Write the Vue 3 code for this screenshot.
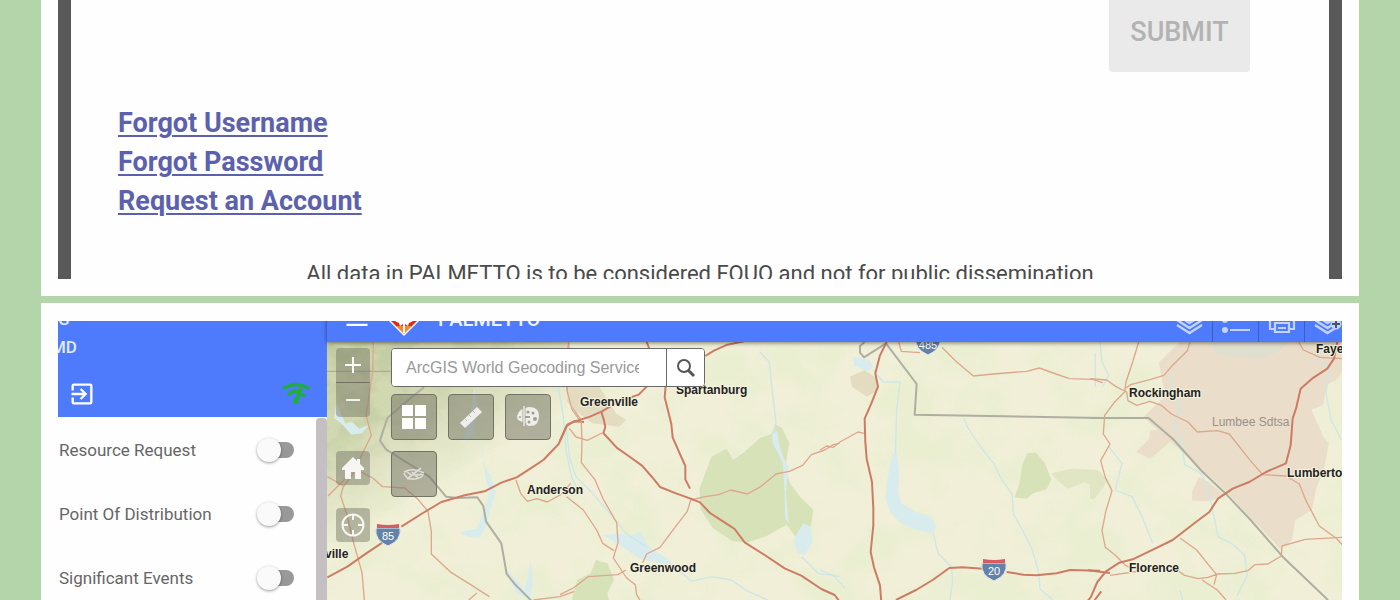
<template>
  <main class="page">
    <section class="card card-login">
      <form class="login" @submit.prevent>
        <button class="submit" type="submit" disabled>SUBMIT</button>
        <nav class="links">
          <a href="#username">Forgot Username</a>
          <a href="#password">Forgot Password</a>
          <a href="#account">Request an Account</a>
        </nav>
        <p class="notice">All data in PALMETTO is to be considered FOUO and not for public dissemination</p>
      </form>
    </section>

    <section class="card card-app">
      <div class="app">
        <aside class="sidebar">
          <div class="profile">
            <div class="who">
              <span>G</span>
              <span>MD</span>
            </div>
            <div class="profile-actions">
              <button class="plain" aria-label="Log out">
                <svg width="28" height="28" viewBox="0 0 24 24" fill="#fff">
                  <path d="M10.1 15.6 11.5 17l5-5-5-5-1.4 1.4L12.7 11H3v2h9.7zM19 3H5a2 2 0 0 0-2 2v4h2V5h14v14H5v-4H3v4a2 2 0 0 0 2 2h14a2 2 0 0 0 2-2V5a2 2 0 0 0-2-2z" />
                </svg>
              </button>
              <svg width="30" height="26" viewBox="0 0 30 26" fill="none" stroke="#1fae3c" stroke-width="3.4">
                <path d="M2 8Q14 -1 28 8M7 14Q12 9 18 10.500M20 13l4 2" />
                <path d="M20 7l-5 14" stroke-width="4" />
                <circle cx="15" cy="20" r="2" fill="#1fae3c" stroke-width="2" />
              </svg>
            </div>
          </div>
          <div class="layers">
            <ul>
              <li v-for="layer in layers" :key="layer.id">
                <label :for="layer.id">{{ layer.name }}</label>
                <input :id="layer.id" v-model="layer.on" type="checkbox" class="toggle" />
              </li>
            </ul>
            <div class="scrollbar"></div>
          </div>
        </aside>

        <div class="content">
          <header class="toolbar">
            <button class="plain menu" aria-label="Menu">
              <svg width="28" height="28" viewBox="0 0 24 24" fill="#fff">
                <path d="M3 6h18v2H3zM3 11h18v2H3zM3 16h18v2H3z" />
              </svg>
            </button>
            <svg class="logo" width="34" height="34" viewBox="0 0 34 34">
              <path d="M17 0 34 17 17 34 0 17z" fill="#fff" />
              <path d="M17 2 32 17H2z" fill="#d91f26" />
              <path d="M2 17h30l-8 8H10z" fill="#de2a22" />
              <path d="M9 24h16l-8 8z" fill="#f3862f" />
              <path d="M16 31v-9l-3 2-1-3-4-2 3-5 6-5 6 5 3 5-4 2-1 3-3-2v9z" fill="#fff" />
            </svg>
            <h1>PALMETTO</h1>
            <div class="toolbar-actions">
              <button aria-label="Layers">
                <svg width="35" height="35" viewBox="0 0 35 35" fill="none" stroke="#c3d3fd" stroke-width="2.4">
                  <path d="m5 13 12.500-8L30 13 17.500 21zM5 18l12.500 8L30 18M5 23l12.500 8L30 23" />
                </svg>
              </button>
              <button aria-label="Legend">
                <svg width="32" height="32" viewBox="0 0 32 32" fill="#c3d3fd">
                  <circle cx="5" cy="7" r="3" /><circle cx="5" cy="17" r="3" /><circle cx="5" cy="27" r="3" />
                  <path d="M10 6h20v2H10zM10 16h20v2H10zM10 26h20v2H10z" />
                </svg>
              </button>
              <button aria-label="Print">
                <svg width="32" height="32" viewBox="0 0 32 32" fill="none" stroke="#c3d3fd" stroke-width="2.2">
                  <path d="M8 10V4h16v6M9 26H4V15q0-4 4-4h16q4 0 4 4v11h-5M9 20h14v9H9zM12 25h8" />
                </svg>
              </button>
              <button aria-label="Add layer">
                <svg width="35" height="35" viewBox="0 0 35 35" fill="none" stroke="#c3d3fd" stroke-width="2.4">
                  <path d="m5 13 12.500-8L30 13 17.500 21zM5 18l12.500 8L30 18M5 23l12.500 8L30 23" />
                  <circle cx="26" cy="22" r="5" fill="#c3d3fd" stroke-width="1" />
                  <path d="M26 18v8M22 22h8" stroke="#4a5372" stroke-width="2" />
                </svg>
              </button>
            </div>
          </header>

          <div class="map">
            <svg class="basemap" viewBox="0 0 1015 258" preserveAspectRatio="xMinYMin slice">
              <defs>
                <filter id="mottle" x="0" y="0" width="100%" height="100%">
                  <feTurbulence type="fractalNoise" baseFrequency="0.018 0.022" numOctaves="5" seed="7" />
                  <feColorMatrix values="0 0 0 0 .8  0 0 0 0 .86  0 0 0 0 .62  4 0 0 0 -1.6" />
                </filter>
                <filter id="relief" x="0" y="0" width="100%" height="100%">
                  <feTurbulence type="fractalNoise" baseFrequency="0.04 0.06" numOctaves="4" seed="12" />
                  <feColorMatrix values="0 0 0 0 .48  0 0 0 0 .55  0 0 0 0 .32  3.6 0 0 0 -1.4" />
                </filter>
                <linearGradient id="hills" x1="0" y1="0" x2="0.7" y2="1">
                  <stop offset="0" stop-color="#fff" />
                  <stop offset=".35" stop-color="#fff" stop-opacity=".8" />
                  <stop offset=".7" stop-color="#fff" stop-opacity="0" />
                </linearGradient>
                <mask id="highland"><rect width="240" height="200" fill="url(#hills)" /></mask>
              </defs>

              <rect width="1015" height="258" fill="#f1efd8" />
              <rect width="1015" height="258" filter="url(#mottle)" opacity=".55" />
              <g mask="url(#highland)">
                <rect width="240" height="200" fill="#bec897" opacity=".7" />
                <rect width="240" height="200" filter="url(#relief)" opacity=".6" />
              </g>

              <g transform="scale(.33333)">
                <g v-for="tile in tiles" :key="tile.x" :transform="`translate(${tile.x} -96)`">
                  <path v-for="(shape, i) in tile.shapes" :key="i" :class="shape[0]" :d="shape[1]" />
                </g>
              </g>

              <g v-for="s in shields" :key="s.text" :transform="`translate(${s.x} ${s.y})`">
                <path d="M-12-6H12Q14 6 0 12-14 6-12-6z" fill="#6482a8" stroke="#e9edf0" />
                <path v-if="s.text !== '485'" d="M-11-10q11 2 22 0v4h-22z" fill="#d95b62" />
                <text class="shield" y="6">{{ s.text }}</text>
              </g>
              <text v-for="c in cities" :key="c.name" class="city" :x="c.x" :y="c.y">{{ c.name }}</text>
              <text class="area" x="885" y="84">Lumbee Sdtsa</text>
            </svg>

            <div class="controls">
              <div class="nav-controls">
                <div class="zoom">
                  <button aria-label="Zoom in">
                    <svg width="18" height="18" viewBox="0 0 18 18"><path d="M9 1v16M1 9h16" stroke="#fff" stroke-width="2" /></svg>
                  </button>
                  <button aria-label="Zoom out">
                    <svg width="18" height="18" viewBox="0 0 18 18"><path d="M2 9h14" stroke="#f1f1ee" stroke-width="2" /></svg>
                  </button>
                </div>
                <button class="home" aria-label="Default extent">
                  <svg width="24" height="24" viewBox="0 0 24 24" fill="#f7f6f4">
                    <path d="M12 1 1 12v2h3v9h6v-7h4v7h6v-9h3v-2l-4-4V3h-3v2z" />
                  </svg>
                </button>
                <button class="locate" aria-label="My location">
                  <svg width="26" height="26" viewBox="0 0 26 26" fill="none" stroke="#f7f6f2" stroke-width="2">
                    <circle cx="13" cy="13" r="10.500" /><path d="M13 2v6M13 18v6M2 13h6M18 13h6" />
                  </svg>
                </button>
              </div>

              <div class="panel">
                <form class="search" @submit.prevent>
                  <input v-model="query" type="text" aria-label="Search" placeholder="ArcGIS World Geocoding Service" />
                  <button aria-label="Find">
                    <svg width="20" height="20" viewBox="0 0 20 20" fill="none" stroke="#555">
                      <circle cx="8" cy="8" r="6" stroke-width="2" /><path d="m12 12 6 6" stroke-width="3" />
                    </svg>
                  </button>
                </form>
                <div class="widgets">
                  <button aria-label="Basemap gallery">
                    <svg width="24" height="24" viewBox="0 0 24 24" fill="#fff"><path d="M0 0h11v11H0zM13 0h11v11H13zM0 13h11v11H0zM13 13h11v11H13z" /></svg>
                  </button>
                  <button aria-label="Measurement">
                    <svg width="24" height="24" viewBox="0 0 24 24">
                      <path d="m1 18 17-16 5 5L6 23z" fill="#efeeea" />
                      <path d="m6 14 2 2m2-6 2 2m2-6 2 2" stroke="#b9bab0" fill="none" />
                    </svg>
                  </button>
                  <button aria-label="Draw">
                    <svg width="26" height="24" viewBox="0 0 26 24">
                      <path d="M2 11Q4 3 14 2q10 0 10 9 0 10-9 10-4 0-5-4Q2 17 2 11z" fill="#efeee9" />
                      <g fill="#9fa28d"><circle cx="13" cy="7" r="1.500" /><circle cx="18" cy="8" r="1.500" /><circle cx="20" cy="14" r="2" /><circle cx="14" cy="17" r="1.500" /><circle cx="5" cy="12" r="1" /></g>
                      <path d="M9 1v20" stroke="#9fa28d" stroke-width="3" /><path d="M9 1v20" stroke="#efeee9" stroke-width="1.500" /><path d="M10 12h5" stroke="#9fa28d" stroke-width="2" />
                    </svg>
                  </button>
                  <button aria-label="Visibility">
                    <svg width="24" height="20" viewBox="0 0 24 20" fill="none" stroke="#dddcd6">
                      <path d="M2 8q10-5 20 1M2 9q2 7 11 6 8-1 8-5M5 8q6 5 15 2M5 15 19 4M10 8l6 6" stroke-width="1.600" />
                    </svg>
                  </button>
                </div>
              </div>
            </div>
          </div>
        </div>
      </div>
    </section>
  </main>
</template>

<script setup>
import { reactive, ref } from 'vue';

const query = ref('');

const layers = reactive([
  { id: 'resource', name: 'Resource Request', on: false },
  { id: 'distribution', name: 'Point Of Distribution', on: false },
  { id: 'events', name: 'Significant Events', on: false },
]);

const cities = [
  { name: 'Greenville', x: 253, y: 64 },
  { name: 'Spartanburg', x: 349, y: 52 },
  { name: 'Anderson', x: 200, y: 152 },
  { name: 'Greenwood', x: 303, y: 230 },
  { name: 'ville', x: -2, y: 216 },
  { name: 'Rockingham', x: 802, y: 55 },
  { name: 'Fayetteville', x: 989, y: 11 },
  { name: 'Lumberton', x: 960, y: 135 },
  { name: 'Florence', x: 802, y: 230 },
];

const shields = [
  { text: '85', x: 61, y: 192 },
  { text: '20', x: 667, y: 227 },
  { text: '485', x: 601, y: 1 },
];

// each tile is [class, path] pairs in its own local units
const tiles = [
  {
    x: -21,
    shapes: [
      ['water', 'M50 280l12 30 14 30 20-4 22 20 28-10-20 24-32 4-26-30-26-20z'],
      ['water', 'M464 235l8 60-14 80-32 24 20-60zM485 400l10 70 16 26 16 50-18 60-10 42-20 36-36-4-24-14 50-10 22-50 18-60-12-40-6-40zM550 770l40 80 40 20-30-50zM632 752l8 70-14 48-12-30z'],
      ['stream', 'M710 200l10 60 10 60 8 100 16 80 20 40'],
      ['county', 'M20 184h192'],
      ['border', 'M312 232l-50 40-60 52-22 68 18 26 70 44 60 38 50 60 34 4 60-2 18 26 8 46 46 66 16 92 24 30 50 50'],
      ['minor', 'M160 96l-2 90-20 130 16 60-34 70-36 52-60 60M22 500l50 28 36-50 50 26 30 26 66 4 40 34 30 36 10 60 0 68 60 56 58 36 56 36M70 528l-8 30 20 60 16 70 28 100 8 92'],
      ['minor', 'M588 510l14 40 20 24 28-8 32 10 40-22 30-34M745 96l-5 65 0 75 16 54 26 38M640 870l80-10 60-22M470 850l-24 20'],
      ['major', 'M22 802l60-32 60-42 60-40M244 650l60-38 60-36 70-20 60-12 50-26 46-16 50-32 30-20 46-48 26-58 20-10 30 2'],
    ],
  },
  {
    x: 699,
    shapes: [
      ['forest', 'M454 440l46-24 20 34 30-22 50-44 34-12 12-30 20 12 22 46-12 70 14 50 30 40 40 40-10 62-36 28-34-46-60 34-60 20-42-4-60-40-36-56-4-60z'],
      ['forest', 'M52 810l40-20 16-40 34 10 20 50-20 40 6 24H34z'],
      ['urban', 'M28 232l90-2 50 80 30 20-20 20-80-10-50-36-28-30z'],
      ['water', 'M636 372l16-10 4 36 16 50 14 20-8 80 8 90-10-10-2-80-6-90-30-60zM700 690l30-50 22 10 6 46-24 40-24-10zM180 670l30 10 30-16 30 50 50 30 40 40-60-24-60-14-60-40-50-30z'],
      ['stream', 'M360 784l34 30 60-14 60 10 50 34 60 26M600 126l28 30 8 80 12 100-10 40M20 360l8 80 20 60 50 50 60 70 40 50 60 40M725 740l50 50 65 10'],
      ['minor', 'M26 96l4 60-8 90 14 52 28 40 2 60-2 60 40 50 26 60 40 70 4 60-14 46 40 60 26 20 4 30 20 34M28 355l20 26 34 10 44-22M20 560l50 40 40 60 18 40 34 22M0 854l40-20 44-34 90-6 24-14'],
      ['minor', 'M248 758l12-26 40-20 24-32 30-40 28-36 10-34 44-10 40-6 36-14 50 12 40-22 46-38 40-8 40-18 26-32 40-14 26-16 18-4'],
      ['major', 'M0 392l20-44 20-12 50-16 36-16 50-30 60-20 28-28M124 305l8 26 4 20-6 18 40 44 40 28 36 26 30 34 24 30 50 20 40 14 30 12 30 32 40 26 34 22 30 40 60 38 60 40 50 22 60 40 40 18 30 40M260 96l14 36 46 60-6 70 20 80 4 40 20 46 18 40 0 40 14 28M436 138l26-16 40-18 50-10'],
    ],
  },
  {
    x: 1479,
    shapes: [
      ['forest', 'M622 430l26-2 26 30 20 50-14 30-40 12-20 16-36-4 14-40 10-60z'],
      ['woodland', 'M694 490l60-14 80 4 30 30-20 30-50-24-50 20-30-24z'],
      ['urban', 'M90 200l44-20 36 24 0 40-30 16-44-30z'],
      ['water', 'M100 140l50 10 10 20-14 14-44-16zM218 430l12-4 8 60-4 60 10 34 40 24 50 16 14 30-10 20-50-10-50-24-28-30-14-40 6-60z'],
      ['stream', 'M160 180l30 36 50 0-10 80-4 140M340 670l14 60 40 40 4 40-8 60M432 325l10 26 40 60 40 50 24 50 30 40 4 60 26 46 30 60 20 70 4 50 40 34 50 50M0 780l40 16 36 40M826 130l0 100'],
      ['border', 'M134 96l-14 12 0 20 12 14 66-42 92 122-6 92 560 10'],
      ['minor', 'M236 96l8 28 56 4M366 112l40 40 54 46 60-6 100-8 38-10 50 18 40 14 70 2 30 10M0 420l20-12 20 4 20-16 54-30 18 4'],
      ['major', 'M200 96l-20 40-14 54 8 40-20 50-20 46 2 70 4 50 16 70 4 80 0 50-8 80 10 46 18 54 4 50M228 870l60-30 50-30 50-36 40-2 60 4M560 786l50 8 40 2 60-6 40-10 90 2M824 870l20-26'],
    ],
  },
  {
    x: 2289,
    shapes: [
      ['reserve', 'M270 96h486v90l-16 24-30 14-10 60-36 16 36 80 16 20-14 80-22 50-14 70-50 30-10 60-34 28-180-190-180-160-52-46 66-64-20-100 40-40z'],
      ['reserve', 'M180 360l60 0 0 36-60 50-42-20 40-40zM306 546l20-44 26 12 50 40-42 20-54-2z'],
      ['lake', 'M360 96h240l-40 30-40 20-80-4-60-10z'],
      ['woodland', 'M0 510l30-14 14 30-30 40H0z'],
      ['stream', 'M30 96l6 60 20 40-20 36M690 110l-2 40 30 30-10 70 16 80 30 60M240 190l10 70 24 30-20 60 20 40 10 74 50 26 20 50 14 60 16 80 40 20 40 36 8 60-30 60M56 410l40 50-20 80 50 20 30 60 20 50 12 30M270 840l8 30'],
      ['border', 'M0 324h176l76 66 80 90 80 76 70 74 96 110 136 130'],
      ['minor', 'M146 96l-18 60-20 60-4 30-30 30-30 40-4 56 20 30-28 50 14 50 20 40-18 60-12 60 10 50 30 24 30 30 20 10M300 96l-8 26-50 50-20 24-40 12-60 16-14 10M0 206l50 4 28 20 32 16 4 26 26 14 40-12 34 12 30 26 50 24 28 30 60-4 36 10 60 76 40 46 70 4 40 24 20 50 40 76 50 36 26 28M756 682l-110 6-70 20-2 30-40 24-40 2-20 18-40 8-50 2-30 10-30 4-40-10-20-14M270 684l50 36 40 50 20 24-8 30M60 796l70-10 70-10M336 810l46 30 26 30M626 96l14 24 50 22 66 4'],
      ['major', 'M742 96l-10 50-20 30-46 30-34 30-14 60-10 30-6 80-14 54-60 26-50 30-50 20-44 30-26 40-40 30-70 54-70 34-50 24-40 10-40 26-26 32-20 46-20 24M-6 781l66 8'],
    ],
  },
];
</script>

<style>
body {
  margin: 0;
  background: #b4d5aa;
}
</style>

<style scoped>
* {
  box-sizing: border-box;
}

.page {
  display: flex;
  flex-direction: column;
  gap: 7px;
  height: 100vh;
  padding: 0 41px;
  overflow: hidden;
  font-family: Roboto, "Liberation Sans", sans-serif;
}

button {
  display: flex;
  align-items: center;
  justify-content: center;
  padding: 0;
  border: none;
  font-family: inherit;
}

.plain {
  background: none;
}

.card {
  padding: 0 17px;
  background: #fefefe;
}

.card-login {
  padding-bottom: 17px;
}

.card-app {
  display: flex;
  flex: 1;
  min-height: 0;
  padding-top: 18px;
}

.login {
  overflow: hidden;
  border: solid #595959;
  border-width: 0 13px;
}

.submit {
  width: 141px;
  height: 80px;
  margin: -8px 79px 32px auto;
  border-radius: 4px;
  background: #eaeaea;
  color: #b3b3b3;
  font-size: 27px;
  font-weight: 500;
}

.links {
  display: flex;
  flex-direction: column;
  align-items: flex-start;
  padding-left: 47px;
}

.links a {
  color: #5c61ae;
  font-size: 27px;
  font-weight: 700;
  line-height: 39px;
  text-decoration-thickness: 2px;
  text-underline-offset: 3px;
}

.notice {
  margin: 37px 0 -11px;
  color: #4a4a4a;
  font-size: 22px;
  line-height: 32px;
  text-align: center;
}

.app {
  display: flex;
  flex: 1;
  min-width: 0;
  overflow: hidden;
}

.sidebar {
  display: flex;
  flex: none;
  flex-direction: column;
  width: 269px;
}

.profile {
  display: flex;
  flex: none;
  flex-direction: column;
  justify-content: space-between;
  height: 96px;
  padding: 0 16px 9px 10px;
  overflow: hidden;
  background: #4e7bfb;
}

.who {
  display: flex;
  flex-direction: column;
  margin: -16px 0 0 -17px;
  color: #e3eaff;
  font-size: 17px;
  font-weight: 500;
  line-height: 28px;
}

.who span:first-child {
  padding-left: 7px;
}

.profile-actions {
  display: flex;
  align-items: center;
  justify-content: space-between;
}

.layers {
  display: flex;
  flex: 1;
  padding-top: 1px;
}

.layers ul {
  flex: 1;
  margin: 0;
  padding: 0 22px 0 1px;
  list-style: none;
}

.layers li {
  display: flex;
  align-items: center;
  justify-content: space-between;
  height: 64px;
  color: #666;
  font-size: 17px;
}

.toggle {
  position: relative;
  width: 33px;
  height: 16px;
  margin: 0;
  border-radius: 8px;
  background: #999;
  appearance: none;
}

.toggle::before {
  content: "";
  position: absolute;
  top: -4px;
  left: -4px;
  width: 24px;
  height: 24px;
  border-radius: 50%;
  background: #fafafa;
  box-shadow: 0 1px 3px rgba(0, 0, 0, 0.4);
}

.toggle:checked::before {
  left: 13px;
}

.scrollbar {
  width: 11px;
  border-radius: 4px 4px 0 0;
  background: #c3bfc3;
}

.content {
  display: flex;
  flex: 1;
  flex-direction: column;
  min-width: 0;
}

.toolbar {
  position: relative;
  z-index: 1;
  display: flex;
  flex: none;
  align-items: center;
  height: 46px;
  margin-top: -25px;
  padding-left: 16px;
  background: #4e7bfb;
  box-shadow: 0 1px 4px rgba(0, 0, 0, 0.5);
}

.logo {
  margin: 0 17px 0 16px;
}

.toolbar h1 {
  margin: 0;
  color: #edf2ff;
  font-size: 20px;
  font-weight: 500;
}

.toolbar-actions {
  display: flex;
  margin: 0 -8px 0 auto;
}

.toolbar-actions button {
  width: 46px;
  height: 46px;
  border-left: 1px solid #3c5ebd;
  background: none;
}

.toolbar-actions button:first-child {
  border-left: none;
}

.map {
  position: relative;
  flex: 1;
  overflow: hidden;
}

.basemap {
  position: absolute;
  inset: 0;
  width: 100%;
  height: 100%;
}

.basemap path {
  stroke-linejoin: round;
}

.major,
.minor,
.stream,
.county,
.border {
  fill: none;
}

.major {
  stroke: #cc7c64;
  stroke-width: 6px;
}

.minor {
  stroke: #dda78e;
  stroke-width: 4px;
}

.stream {
  stroke: #cde6e6;
  stroke-width: 4px;
}

.county {
  stroke: #a3a68b;
  stroke-width: 3px;
}

.border {
  stroke: #afaea2;
  stroke-width: 6px;
}

.water {
  fill: #d8ecee;
}

.lake {
  fill: #dfdfd0;
}

.forest {
  fill: #d8e2b8;
}

.woodland {
  fill: #e0e5c4;
}

.urban {
  fill: #e3dcc0;
}

.reserve {
  fill: #eaddc9;
}

.city {
  fill: #222;
  stroke: #f4f2dd;
  stroke-width: 2px;
  paint-order: stroke;
  font: bold 12px "Liberation Sans", sans-serif;
}

.area {
  fill: #99928a;
  font: 12px "Liberation Sans", sans-serif;
}

.shield {
  fill: #fff;
  font: 11px "Liberation Sans", sans-serif;
  text-anchor: middle;
}

.controls {
  position: relative;
  display: flex;
  align-items: flex-start;
  gap: 21px;
  padding: 6px 9px;
}

.nav-controls {
  display: flex;
  flex-direction: column;
}

.nav-controls button {
  width: 34px;
  height: 34px;
  border-radius: 4px;
  background: rgba(112, 114, 98, 0.45);
}

.nav-controls .zoom button:first-child {
  height: 35px;
  border-bottom: 1px solid #6f725f;
  border-radius: 4px 4px 0 0;
}

.nav-controls .zoom button:last-child {
  border-radius: 0 0 4px 4px;
}

.nav-controls .home {
  margin: 34px 0 23px;
}

.search {
  display: flex;
  width: 314px;
  height: 39px;
  margin-bottom: 7px;
  border: 1px solid #6a6a6a;
  border-radius: 4px;
  background: #fff;
  overflow: hidden;
}

.search input {
  flex: 1;
  min-width: 0;
  padding: 0 27px 0 14px;
  border: none;
  font: 16px "Liberation Sans", sans-serif;
  outline: none;
}

.search input::placeholder {
  color: #999;
}

.search button {
  width: 38px;
  border-left: 1px solid #6a6a6a;
  background: #fff;
}

.widgets {
  display: grid;
  grid-template-columns: repeat(3, 46px);
  gap: 11px;
}

.widgets button {
  height: 46px;
  border: 1px solid #727565;
  border-radius: 4px;
  background: rgba(112, 112, 98, 0.5);
}
</style>
